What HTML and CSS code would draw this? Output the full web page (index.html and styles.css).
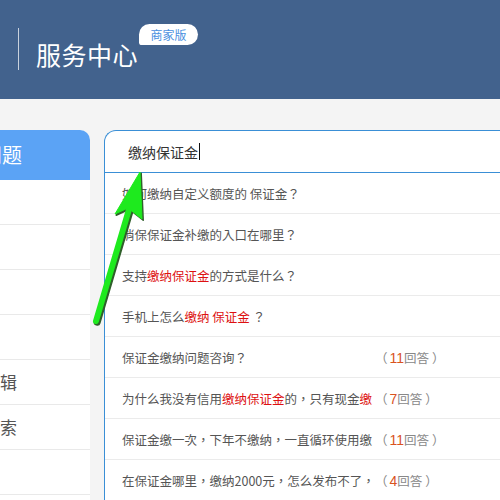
FILE: index.html
```html
<!DOCTYPE html>
<html lang="zh-CN">
<head>
<meta charset="utf-8">
<title>服务中心</title>
<link rel="stylesheet" href="styles.css">
</head>
<body>
<header class="header">
  <span class="header-line"></span>
  <div class="brand">
    <h1 class="brand-title">服务中心</h1>
    <span class="brand-badge">商家版</span>
  </div>
</header>
<main class="main">
  <aside class="sidebar">
    <div class="sidebar-inner">
      <div class="side-tab">常见问题</div>
      <div class="side-item">保证金</div>
      <div class="side-item">退款</div>
      <div class="side-item">交易</div>
      <div class="side-item">物流</div>
      <div class="side-item">宝贝编辑</div>
      <div class="side-item">宝贝搜索</div>
      <div class="side-item">账户</div>
      <div class="side-item">规则</div>
    </div>
  </aside>
  <section class="panel">
    <div class="search">
      <span class="search-text">缴纳保证金</span><span class="caret"></span>
    </div>
    <ul class="results" lang="zh-Hant">
      <li class="row"><span class="title">如何缴纳自定义额度的 保证金？</span></li>
      <li class="row"><span class="title">消保保证金补缴的入口在哪里？</span></li>
      <li class="row"><span class="title">支持<em class="hl">缴纳保证金</em>的方式是什么？</span></li>
      <li class="row"><span class="title">手机上怎么<em class="hl">缴纳 保证金</em> ？</span></li>
      <li class="row"><span class="title">保证金缴纳问题咨询？</span><span class="count">（<b class="num">11</b>回答<span class="close">）</span></span></li>
      <li class="row"><span class="title">为什么我没有信用<em class="hl">缴纳保证金</em>的，只有现金<em class="hl">缴</em></span><span class="count">（<b class="num">7</b>回答<span class="close">）</span></span></li>
      <li class="row"><span class="title">保证金缴一次，下年不缴纳，一直循环使用缴</span><span class="count">（<b class="num">11</b>回答<span class="close">）</span></span></li>
      <li class="row"><span class="title">在保证金哪里，缴纳2000元，怎么发布不了，</span><span class="count">（<b class="num">4</b>回答<span class="close">）</span></span></li>
    </ul>
  </section>
</main>
<svg class="annot" width="500" height="500" viewBox="0 0 500 500" aria-hidden="true">
  <g transform="translate(1.2,1.2)" fill="#2f5f2a" stroke="#2f5f2a">
    <line x1="130" y1="206" x2="96" y2="321" stroke-width="7" stroke-linecap="round"/>
    <polygon points="140,172 115,214 128,208 142,219" stroke-width="1.5" stroke-linejoin="round"/>
  </g>
  <g fill="#1eea1e" stroke="#1eea1e">
    <line x1="130" y1="206" x2="96" y2="321" stroke-width="6" stroke-linecap="round"/>
    <polygon points="140,172 115,214 128,208 142,219" stroke-width="1" stroke-linejoin="round"/>
  </g>
</svg>
</body>
</html>
```

FILE: styles.css
```css
html, body {
  margin: 0;
  padding: 0;
  width: 500px;
  height: 500px;
  overflow: hidden;
}
body {
  background: #f4f4f4;
  font-family: "Noto Sans CJK SC", "Noto Sans", sans-serif;
  color: #555;
  position: relative;
}
.header {
  height: 99px;
  background: #42628d;
  display: flex;
  align-items: flex-start;
  padding-left: 18px;
  box-sizing: border-box;
}
.header-line {
  width: 1px;
  height: 42px;
  margin-top: 28px;
  background: #c9d2de;
}
.brand {
  position: relative;
  margin-left: 17px;
  margin-top: 40px;
}
.brand-title {
  margin: 0;
  font-size: 25px;
  line-height: 28px;
  font-weight: normal;
  color: #fff;
  letter-spacing: 0.5px;
  white-space: nowrap;
}
.brand-badge {
  position: absolute;
  left: 100%;
  top: -16px;
  margin-left: 1px;
  width: 59px;
  height: 21px;
  background: #fff;
  color: #4a8fe0;
  font-size: 12px;
  line-height: 21px;
  text-align: center;
  border-radius: 11px 11px 11px 3px;
  white-space: nowrap;
}
.main {
  display: flex;
  align-items: flex-start;
  padding-top: 31px;
  gap: 14px;
}
.sidebar {
  width: 90px;
  flex-shrink: 0;
  overflow: hidden;
  background: #fff;
  border-top-right-radius: 10px;
  height: 400px;
}
.sidebar-inner {
  width: 200px;
  margin-left: -110px;
}
.side-tab {
  height: 50px;
  background: #5ba3f5;
  color: #fff;
  font-size: 20px;
  line-height: 50px;
  padding-left: 52px;
  white-space: nowrap;
}
.side-item {
  height: 44px;
  line-height: 44px;
  border-bottom: 1px solid #e9e9e9;
  font-size: 17px;
  padding-left: 59px;
  color: #555;
  white-space: nowrap;
}
.panel {
  width: 600px;
  flex-shrink: 0;
  background: #fff;
  border-top: 1px solid #3a8fd6;
  border-left: 1px solid #3a8fd6;
  border-top-left-radius: 12px;
  height: 400px;
}
.search {
  height: 41px;
  border-bottom: 1px solid #3a8fd6;
  display: flex;
  align-items: center;
  padding-left: 23px;
}
.search-text {
  font-size: 14px;
  color: #333;
  line-height: 20px;
}
.caret {
  width: 1px;
  height: 17px;
  background: #111;
  margin-left: 1px;
}
.results {
  list-style: none;
  margin: 0;
  padding: 0;
}
.row {
  height: 40px;
  border-bottom: 1px solid #ebebeb;
  display: flex;
  align-items: center;
  padding-left: 17px;
  font-family: "Noto Sans CJK TC", "Noto Sans CJK SC", sans-serif;
  font-size: 12.5px;
  color: #555;
}
.title {
  width: 253px;
  white-space: nowrap;
  overflow: hidden;
}
.hl {
  font-style: normal;
  color: #dd1111;
}
.count {
  color: #888;
  white-space: nowrap;
}
.num {
  font-weight: normal;
  font-family: "Liberation Sans", Arial, sans-serif;
  font-size: 14px;
  color: #d9531e;
  margin-left: 2px;
}
.close {
  margin-left: 3px;
}
.annot {
  position: absolute;
  left: 0;
  top: 0;
  pointer-events: none;
}
```
